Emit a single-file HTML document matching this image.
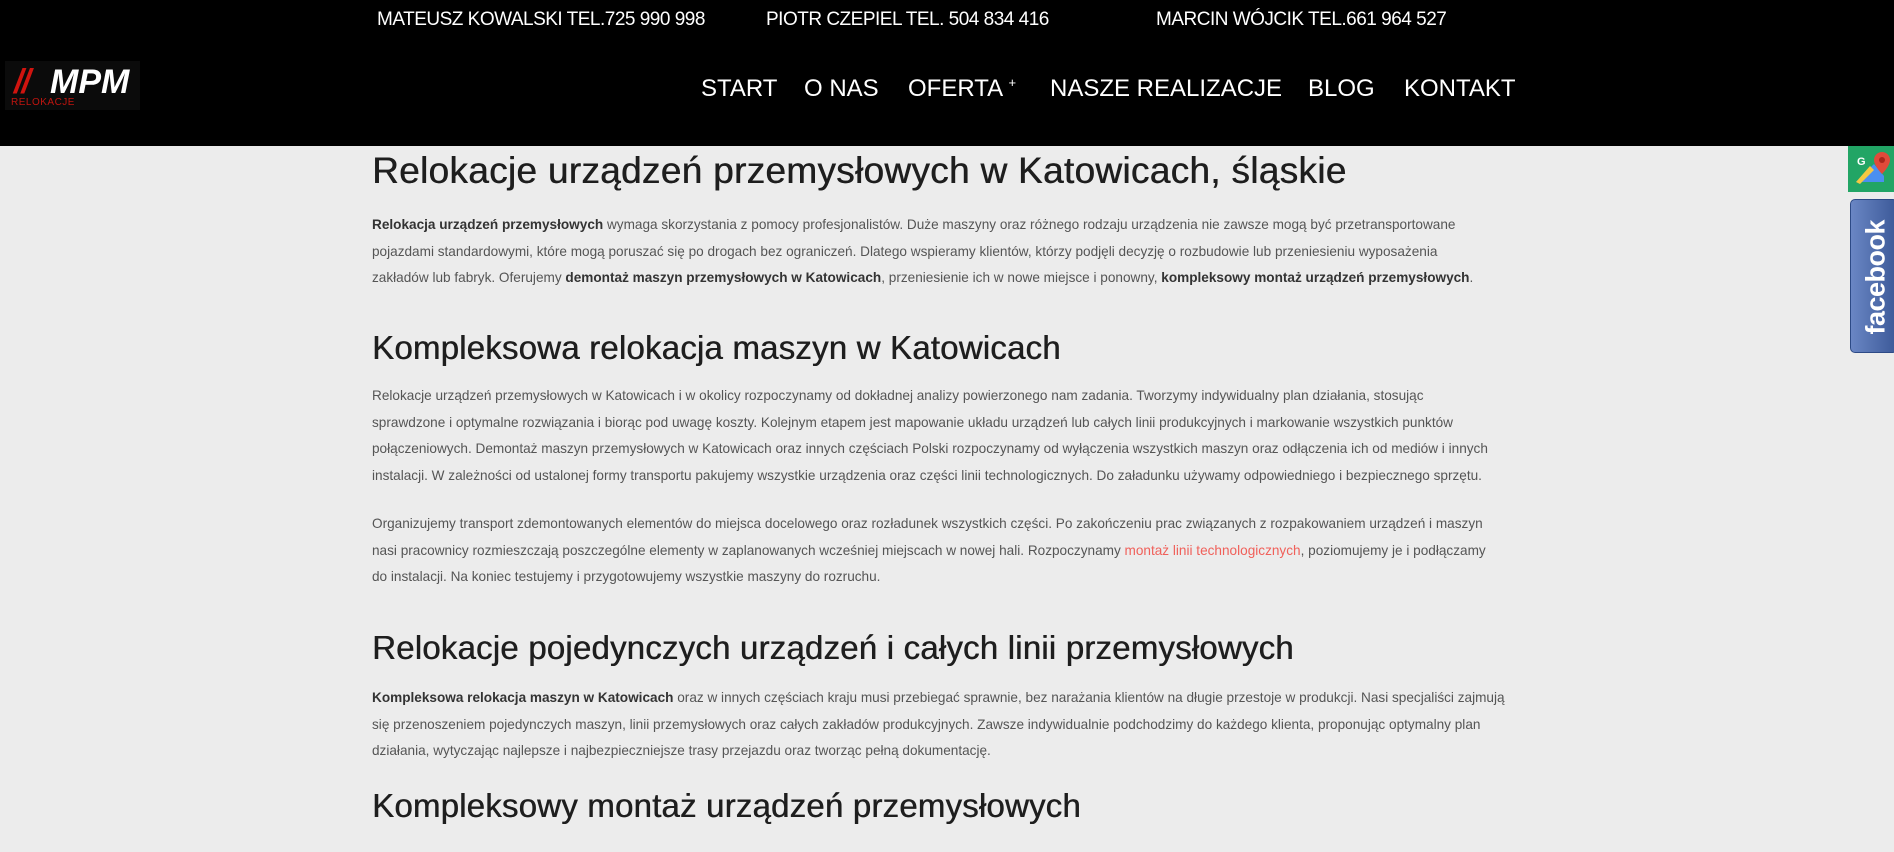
<!DOCTYPE html>
<html><head><meta charset="utf-8"><style>
*{margin:0;padding:0;box-sizing:border-box}
body{width:1894px;height:852px;overflow:hidden;background:#ececec;font-family:"Liberation Sans",sans-serif;position:relative}
.hdr{position:absolute;left:0;top:0;width:1894px;height:146px;background:#000}
.ph{position:absolute;top:9px;color:#fff;font-size:19px;letter-spacing:-0.5px;white-space:nowrap}
.nav{position:absolute;top:75px;color:#fff;font-size:24px;white-space:nowrap}
.nav span{position:absolute}
.logo{position:absolute;left:5px;top:61px;width:135px;height:49px;background:#0b0b0b}
.logo .m{position:absolute;left:45px;top:2px;color:#fff;font-size:34px;font-weight:bold;font-style:italic;letter-spacing:0px}
.logo .s{position:absolute;left:9px;top:2px;color:#d0140f;font-size:34px;font-weight:bold;font-style:italic;letter-spacing:-2px}
.logo .r{position:absolute;left:6px;top:36px;color:#c0150f;font-size:10px;letter-spacing:0.5px}
h1,h2{position:absolute;left:372px;color:#1e1e1e;font-weight:normal;white-space:nowrap;text-shadow:0.5px 0 0 #1e1e1e}
h1{font-size:37px;top:150px;letter-spacing:0.3px}
h2{font-size:33px;letter-spacing:0.2px}
p{position:absolute;left:372px;font-size:13.6px;line-height:26.5px;color:#555;white-space:nowrap}
b{color:#333}
a{color:#f0605a;text-decoration:none}
</style></head><body>
<div class="hdr">
<div class="ph" style="left:377px">MATEUSZ KOWALSKI TEL.725 990 998</div>
<div class="ph" style="left:766px">PIOTR CZEPIEL TEL. 504 834 416</div>
<div class="ph" style="left:1156px">MARCIN WÓJCIK TEL.661 964 527</div>
<div class="logo"><span class="s">//</span><span class="m">MPM</span><span class="r">RELOKACJE</span></div>
<div class="nav">
<span style="left:701px">START</span>
<span style="left:804px">O NAS</span>
<span style="left:908px">OFERTA <small style="font-size:13px;vertical-align:top">+</small></span>
<span style="left:1050px">NASZE REALIZACJE</span>
<span style="left:1308px">BLOG</span>
<span style="left:1404px">KONTAKT</span>
</div>
</div>
<div style="position:absolute;left:1848px;top:146px;width:46px;height:46px;background:#22a565">
<svg width="46" height="46"><path d="M8 36 L26 18 L36 30 L36 36Z" fill="#4a8ff0"/><path d="M8 36 L22 20 L26 24 L12 38Z" fill="#f5c842"/><text x="9" y="19" fill="#fff" font-size="11" font-weight="bold" font-family="Liberation Sans">G</text><path d="M34 6a8 8 0 0 1 8 8c0 6-8 14-8 14s-8-8-8-14a8 8 0 0 1 8-8z" fill="#e04a3a"/><circle cx="34" cy="14" r="3" fill="#a8261c"/></svg></div>
<div style="position:absolute;left:1850px;top:199px;width:48px;height:154px;background:linear-gradient(90deg,#6a86c4,#3b5998);border-radius:5px;border:1px solid #2d4a86">
<div style="position:absolute;left:-30px;top:64px;width:110px;transform:rotate(-90deg);color:#fff;font-weight:bold;font-size:27px;text-align:center;letter-spacing:-0.5px">facebook</div></div>

<h1>Relokacje urządzeń przemysłowych w Katowicach, śląskie</h1>
<p style="top:212px"><b>Relokacja urządzeń przemysłowych</b> wymaga skorzystania z pomocy profesjonalistów. Duże maszyny oraz różnego rodzaju urządzenia nie zawsze mogą być przetransportowane<br>pojazdami standardowymi, które mogą poruszać się po drogach bez ograniczeń. Dlatego wspieramy klientów, którzy podjęli decyzję o rozbudowie lub przeniesieniu wyposażenia<br>zakładów lub fabryk. Oferujemy <b>demontaż maszyn przemysłowych w Katowicach</b>, przeniesienie ich w nowe miejsce i ponowny, <b>kompleksowy montaż urządzeń przemysłowych</b>.</p>
<h2 style="top:329px">Kompleksowa relokacja maszyn w Katowicach</h2>
<p style="top:383px">Relokacje urządzeń przemysłowych w Katowicach i w okolicy rozpoczynamy od dokładnej analizy powierzonego nam zadania. Tworzymy indywidualny plan działania, stosując<br>sprawdzone i optymalne rozwiązania i biorąc pod uwagę koszty. Kolejnym etapem jest mapowanie układu urządzeń lub całych linii produkcyjnych i markowanie wszystkich punktów<br>połączeniowych. Demontaż maszyn przemysłowych w Katowicach oraz innych częściach Polski rozpoczynamy od wyłączenia wszystkich maszyn oraz odłączenia ich od mediów i innych<br>instalacji. W zależności od ustalonej formy transportu pakujemy wszystkie urządzenia oraz części linii technologicznych. Do załadunku używamy odpowiedniego i bezpiecznego sprzętu.</p>
<p style="top:511px">Organizujemy transport zdemontowanych elementów do miejsca docelowego oraz rozładunek wszystkich części. Po zakończeniu prac związanych z rozpakowaniem urządzeń i maszyn<br>nasi pracownicy rozmieszczają poszczególne elementy w zaplanowanych wcześniej miejscach w nowej hali. Rozpoczynamy <a>montaż linii technologicznych</a>, poziomujemy je i podłączamy<br>do instalacji. Na koniec testujemy i przygotowujemy wszystkie maszyny do rozruchu.</p>
<h2 style="top:629px">Relokacje pojedynczych urządzeń i całych linii przemysłowych</h2>
<p style="top:685px"><b>Kompleksowa relokacja maszyn w Katowicach</b> oraz w innych częściach kraju musi przebiegać sprawnie, bez narażania klientów na długie przestoje w produkcji. Nasi specjaliści zajmują<br>się przenoszeniem pojedynczych maszyn, linii przemysłowych oraz całych zakładów produkcyjnych. Zawsze indywidualnie podchodzimy do każdego klienta, proponując optymalny plan<br>działania, wytyczając najlepsze i najbezpieczniejsze trasy przejazdu oraz tworząc pełną dokumentację.</p>
<h2 style="top:787px">Kompleksowy montaż urządzeń przemysłowych</h2>
</body></html>
